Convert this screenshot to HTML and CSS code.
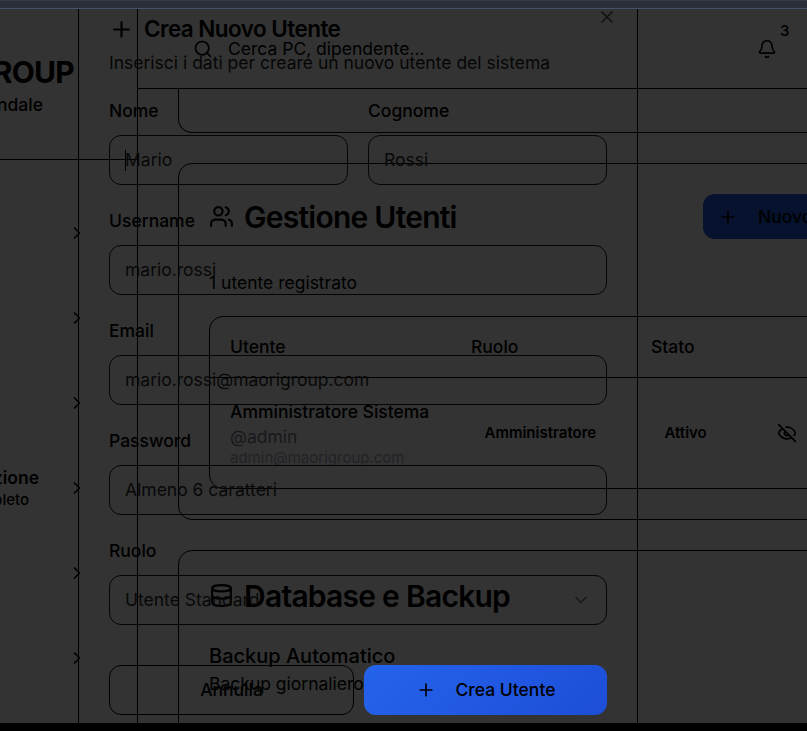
FILE: index.html
```html
<!DOCTYPE html>
<html lang="it">
<head>
<meta charset="utf-8">
<title>Gestione Utenti</title>
<link rel="stylesheet" href="styles.css">
</head>
<body>
<svg class="defs" aria-hidden="true">
  <symbol id="plus" viewBox="0 0 24 24"><path d="M5 12h14M12 5v14"/></symbol>
  <symbol id="chev" viewBox="0 0 24 24"><path d="m9 18 6-6-6-6"/></symbol>
</svg>
<div class="app">
  <div class="strip"></div>
  <div class="shell">
    <aside class="sidebar">
      <div class="brand">
        <div class="brand-name">MAORI GROUP</div>
        <div class="brand-sub">Gestionale Aziendale</div>
      </div>
      <nav class="nav">
        <div class="nav-row"><svg class="icon"><use href="#chev"/></svg></div>
        <div class="nav-row"><svg class="icon"><use href="#chev"/></svg></div>
        <div class="nav-row"><svg class="icon"><use href="#chev"/></svg></div>
        <div class="nav-row"><div class="nav-text"><b>Amministrazione</b><span>Controllo completo</span></div><svg class="icon"><use href="#chev"/></svg></div>
        <div class="nav-row"><svg class="icon"><use href="#chev"/></svg></div>
        <div class="nav-row"><svg class="icon"><use href="#chev"/></svg></div>
      </nav>
    </aside>
    <main class="main">
      <header class="topbar">
        <svg class="icon search" viewBox="0 0 24 24"><circle cx="11" cy="11" r="8"/><path d="m21 21-4.3-4.3"/></svg>
        <span class="search-text">Cerca PC, dipendente...</span>
        <div class="bell">
          <svg class="icon" viewBox="0 0 24 24"><path d="M10.27 21a2 2 0 0 0 3.46 0M3.26 15.33A1 1 0 0 0 4 17h16a1 1 0 0 0 .74-1.67C19.41 13.96 18 12.5 18 8A6 6 0 0 0 6 8c0 4.5-1.41 5.96-2.74 7.33"/></svg>
          <span class="count">3</span>
        </div>
      </header>
      <div class="content">
        <section class="card card-first"></section>
        <section class="card card-users">
          <div class="card-head">
            <svg class="icon big" viewBox="0 0 24 24"><path d="M16 21v-2a4 4 0 0 0-4-4H6a4 4 0 0 0-4 4v2"/><circle cx="9" cy="7" r="4"/><path d="M22 21v-2a4 4 0 0 0-3-3.87M16 3.13a4 4 0 0 1 0 7.75"/></svg>
            <h2>Gestione Utenti</h2>
            <button class="new-user"><svg class="icon"><use href="#plus"/></svg><span>Nuovo Utente</span></button>
          </div>
          <p class="registered">1 utente registrato</p>
          <div class="table">
            <div class="tr th"><span>Utente</span><span>Ruolo</span><span>Stato</span></div>
            <div class="tr td">
              <div class="person"><b>Amministratore Sistema</b><span class="handle">@admin</span><span class="mail">admin@maorigroup.com</span></div>
              <span class="pill">Amministratore</span>
              <span class="pill">Attivo</span>
              <svg class="icon eye" viewBox="0 0 24 24"><path d="M10.733 5.076a10.744 10.744 0 0 1 11.205 6.575 1 1 0 0 1 0 .696 10.747 10.747 0 0 1-1.444 2.49M14.084 14.158a3 3 0 0 1-4.242-4.242M17.479 17.499a10.75 10.75 0 0 1-15.417-5.151 1 1 0 0 1 0-.696 10.75 10.75 0 0 1 4.446-5.143M2 2l20 20"/></svg>
            </div>
          </div>
        </section>
        <section class="card card-db">
          <div class="card-head">
            <svg class="icon big" viewBox="0 0 24 24"><ellipse cx="12" cy="5" rx="9" ry="3"/><path d="M3 5v14a9 3 0 0 0 18 0V5M3 12a9 3 0 0 0 18 0"/></svg>
            <h2>Database e Backup</h2>
          </div>
          <h3>Backup Automatico</h3>
          <p class="daily">Backup giornaliero</p>
        </section>
      </div>
    </main>
  </div>
  <div class="dialog">
    <svg class="icon close" viewBox="0 0 24 24"><path d="M18 6 6 18M6 6l12 12"/></svg>
    <div class="dialog-title"><svg class="icon"><use href="#plus"/></svg><h1>Crea Nuovo Utente</h1></div>
    <p class="desc">Inserisci i dati per creare un nuovo utente del sistema</p>
    <div class="pair">
      <div class="field"><label>Nome</label><div class="input"><i class="caret"></i>Mario</div></div>
      <div class="field"><label>Cognome</label><div class="input">Rossi</div></div>
    </div>
    <div class="field"><label>Username</label><div class="input">mario.rossi</div></div>
    <div class="field"><label>Email</label><div class="input">mario.rossi@maorigroup.com</div></div>
    <div class="field"><label>Password</label><div class="input">Almeno 6 caratteri</div></div>
    <div class="field"><label>Ruolo</label><div class="input select">Utente Standard<svg class="icon down" viewBox="0 0 24 24"><path d="m6 9 6 6 6-6"/></svg></div></div>
    <div class="actions">
      <button class="cancel">Annulla</button>
      <button class="submit"><svg class="icon"><use href="#plus"/></svg><span>Crea Utente</span></button>
    </div>
  </div>
  <div class="bottom"></div>
</div>
</body>
</html>
```
FILE: styles.css
```css
* { box-sizing: border-box; margin: 0; }
body { background: #333; color: #000; font-family: Inter, sans-serif; font-size: 17.5px; line-height: 28px; overflow: hidden; }
button { font: inherit; color: inherit; border: 0; padding: 0; background: none; }
h1, h2, h3 { font-weight: 600; }
b { font-weight: 600; }
.defs { position: absolute; width: 0; height: 0; }
.icon { width: 20px; height: 20px; flex: none; fill: none; stroke: currentColor; stroke-width: 2; stroke-linecap: round; stroke-linejoin: round; }
.app { position: relative; width: 807px; height: 731px; overflow: hidden; display: flex; flex-direction: column; }
.strip { height: 9px; flex: none; background: #2c2f37; border-top: 1px solid #343a46; border-bottom: 1px solid #485069; }
.shell { height: 714px; flex: none; display: flex; overflow: hidden; }
.bottom { height: 8px; flex: none; background: #000; }

.sidebar { width: 138px; flex: none; border-right: 1px solid #000; overflow: hidden; }
.brand { height: 151px; border-bottom: 1px solid #000; padding: 44px 63px 0 0; display: flex; flex-direction: column; align-items: flex-end; white-space: nowrap; }
.brand-name { font-size: 30px; line-height: 38px; font-weight: 700; letter-spacing: -0.75px; }
.brand-sub { font-weight: 500; margin-right: 31px; }
.nav { padding-top: 31px; }
.nav-row { height: 85px; display: flex; justify-content: flex-end; padding: 32px 50px 0 0; }
.nav-text { display: flex; flex-direction: column; align-items: flex-end; white-space: nowrap; margin: -11px 28px 0 0; line-height: 22px; }
.nav-text span { font-size: 15px; font-weight: 500; margin-right: 10px; }

.main { width: 1100px; flex: none; }
.topbar { height: 80px; border-bottom: 1px solid #000; display: flex; align-items: center; padding-left: 55px; }
.search-text { margin-left: 15px; width: 529px; }
.bell { position: relative; display: flex; }
.count { position: absolute; left: 23px; top: -22px; font-size: 15px; font-weight: 500; }
.content { padding: 0 40px; }
.card { border: 1px solid #000; border-radius: 14px; padding: 30px; }
.card-first { height: 44px; padding: 0; border-top: 0; border-radius: 0 0 14px 14px; margin-bottom: 30px; }
.card-users { height: 357px; margin-bottom: 30px; }
.card-db { height: 400px; }
.card-head { display: flex; align-items: center; height: 46px; }
.card-db .card-head { height: 30px; }
.big { width: 25px; height: 25px; margin-bottom: 2px; }
h2 { font-size: 30px; letter-spacing: -0.75px; margin-left: 10px; width: 459px; white-space: nowrap; }
.new-user { display: flex; align-items: center; width: 190px; height: 45px; margin-bottom: 2px; border-radius: 12px; background: #06122e; padding: 1px 0 0 15px; font-weight: 500; }
.new-user span { margin-left: 20px; }
.registered { margin-top: 29px; }
.table { height: 173px; margin-top: 19px; border: 1px solid #000; border-radius: 14px; }
.tr { display: grid; grid-template-columns: 241px 180px 126px 1fr; padding-left: 20px; }
.th { height: 61px; align-items: center; border-bottom: 1px solid #000; font-weight: 500; }
.td { height: 109px; align-items: center; }
.person { display: flex; flex-direction: column; line-height: 25px; }
.person b { font-weight: 500; }
.handle { color: #18181b; }
.mail { color: #222226; font-size: 15px; line-height: 18px; }
.pill { font-size: 15px; font-weight: 600; padding-left: 13.5px; }
h3 { font-size: 20px; font-weight: 500; margin-top: 31px; }

.dialog { position: absolute; left: 78px; top: 9px; width: 560px; height: 714px; border: 1px solid #000; border-width: 0 1px; padding: 6px 30px 0; color: #060606; }
.close { position: absolute; right: 20px; top: -2px; color: #111; }
.dialog-title { display: flex; align-items: center; height: 28px; color: #000; }
.dialog-title .icon { width: 25px; height: 25px; }
h1 { font-size: 22.5px; letter-spacing: -0.56px; margin-left: 10px; }
.desc { margin-top: 6px; }
.pair { display: flex; gap: 20px; margin-top: 20px; }
.field { flex: 1; height: 110px; }
.field label { display: block; font-weight: 500; height: 38px; color: #000; }
.input { height: 50px; border: 1px solid #050505; border-radius: 12px; padding: 0 15px; display: flex; align-items: center; color: #080808; position: relative; }
.caret { position: absolute; left: 15px; top: 14px; width: 1px; height: 21px; background: #000; }
.select { justify-content: space-between; }
.down { color: #1a1a1a; }
.actions { display: grid; grid-template-columns: 245px 243px; gap: 10px; margin-top: 18px; }
.actions button { height: 50px; border-radius: 12px; font-weight: 500; }
.actions .cancel { border: 1px solid #000; color: #000; }
.submit { display: flex; align-items: center; justify-content: center; gap: 20px; color: #000; background: linear-gradient(135deg, #2563eb, #1d4ed8); }
```
